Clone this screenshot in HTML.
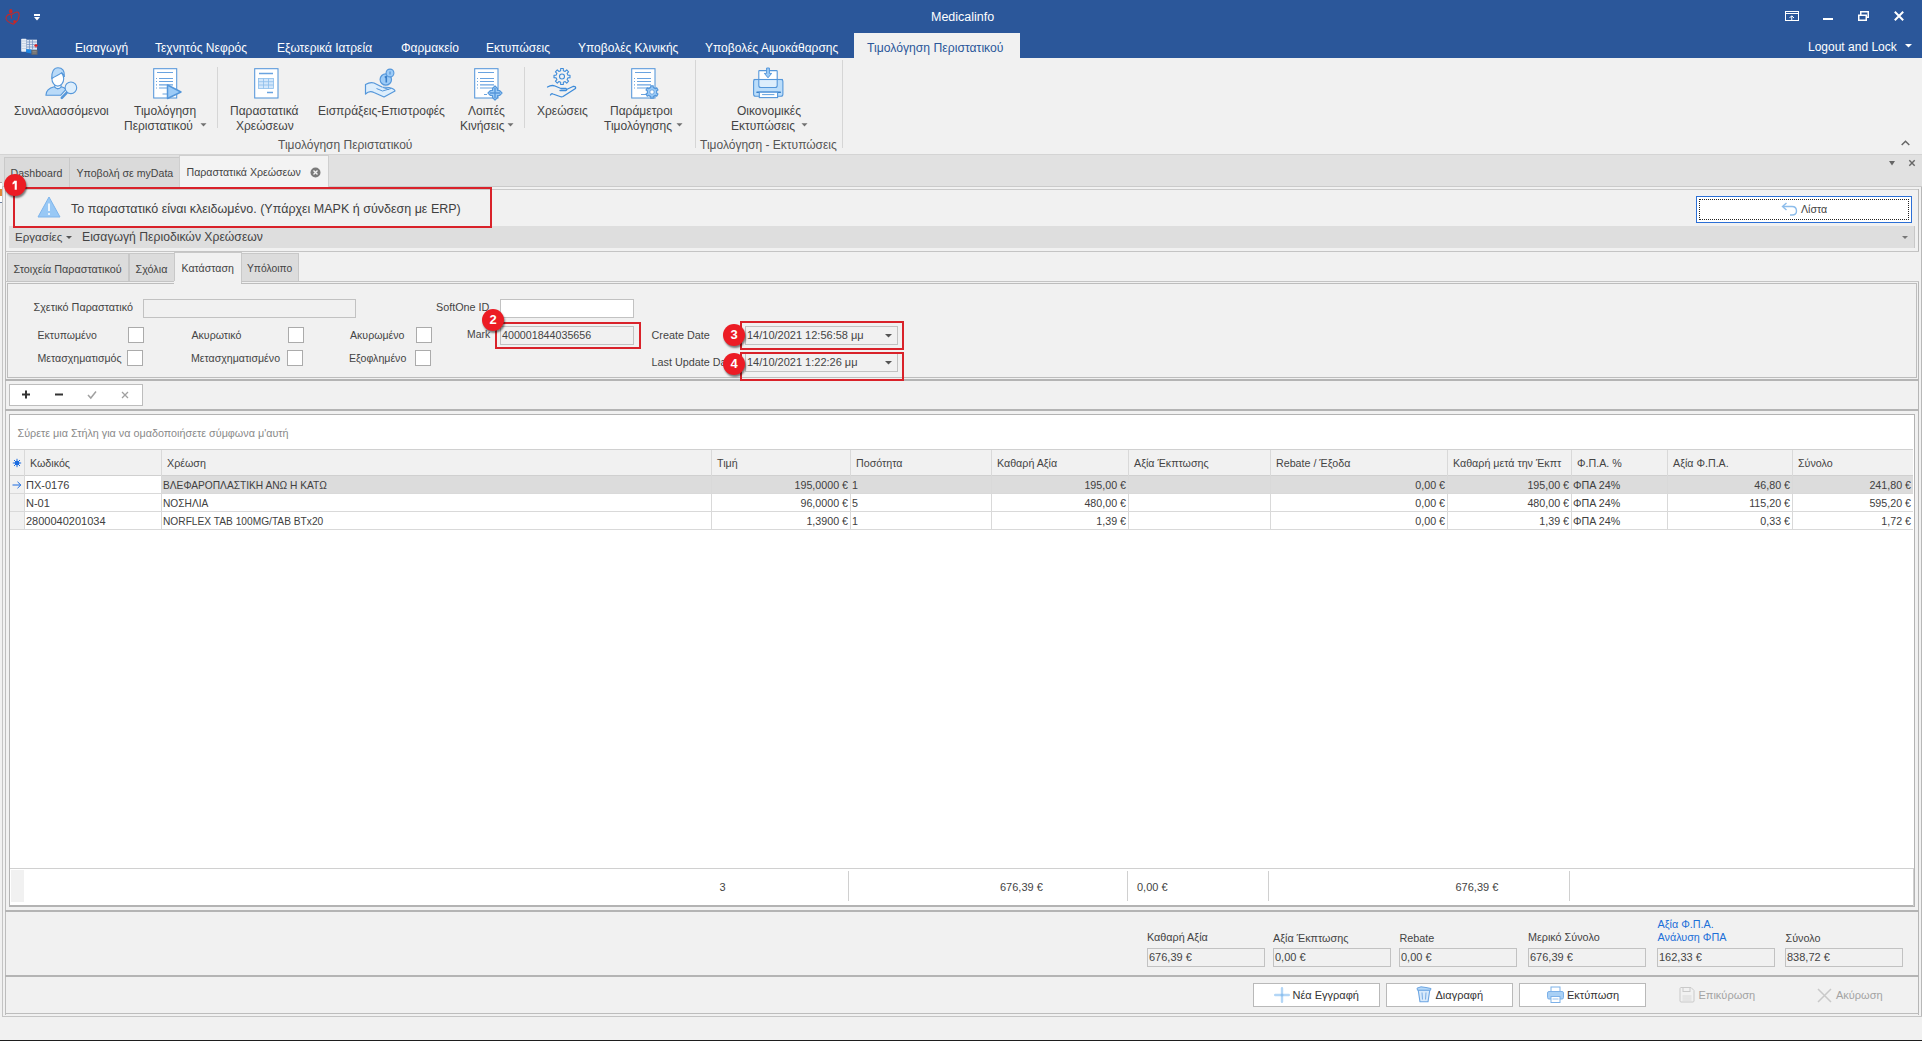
<!DOCTYPE html>
<html><head><meta charset="utf-8">
<style>
*{box-sizing:border-box;margin:0;padding:0}
html,body{width:1922px;height:1041px;overflow:hidden;background:#F1F1F1;font-family:"Liberation Sans",sans-serif;color:#444;font-size:10.7px;position:relative}
.a{position:absolute}
.t{position:absolute;white-space:nowrap;line-height:1}
.rt{color:#fff;font-size:12px;top:42px}
.rl{position:absolute;white-space:nowrap;font-size:12px;line-height:15px;color:#444;text-align:center}
.sep{position:absolute;width:1px;background:#D6D6D6}
.badge{position:absolute;width:22px;height:22px;border-radius:50%;background:#EC1C24;color:#fff;font-weight:bold;font-size:13px;text-align:center;line-height:22px;box-shadow:1px 2px 2px rgba(0,0,0,.5)}
.rbox{position:absolute;border:2px solid #D9222A}
.cb{position:absolute;width:16px;height:16px;background:#fff;border:1px solid #ABABAB}
.tx{position:absolute;border:1px solid #C2C2C2;background:#F1F1F1}
.ln{position:absolute;background:#C6C6C6}
.gl{position:absolute;background:#D9D9D9}
.c{position:absolute;white-space:nowrap;font-size:10.7px;line-height:18px;color:#404040}
.cr{position:absolute;white-space:nowrap;font-size:10.7px;line-height:18px;color:#404040;text-align:right}
.btn{position:absolute;height:24px;border:1px solid #B9B9B9;background:#fff;font-size:11px;color:#333;line-height:22px;white-space:nowrap}
svg{position:absolute;overflow:visible}
</style></head><body>
<!-- TITLE BAR -->
<div class="a" style="left:0;top:0;width:1922px;height:58px;background:#2B579A"></div>
<!-- logo heart -->
<svg style="left:4px;top:8px" width="18" height="18" viewBox="0 0 18 18">
<ellipse cx="6.8" cy="3.3" rx="1.7" ry="2.3" fill="#C62828"/>
<path d="M6.8 6.5 C4.5 6,1.8 7.5,2 10.5 C2.3 13,5.5 14.8,9.4 16.2 C12 14.5,14.5 11.5,15 8.5 C15.5 5.5,14.5 3.8,13 4 C11 4.3,9 5.5,7.2 6.8 L7.6 10.5" fill="none" stroke="#C62828" stroke-width="1.1" stroke-linejoin="round"/>
<circle cx="10.6" cy="13.6" r="1.5" fill="#C62828"/>
</svg>
<svg style="left:21px;top:38px" width="18" height="17" viewBox="0 0 18 17">
<rect x="0.2" y="0.7" width="5.3" height="13" rx="0.8" fill="#E8EEF6"/>
<path d="M0.5 3h5M0.5 5.5h5M0.5 8h5M0.5 10.5h5" stroke="#B8C6DA" stroke-width="0.7"/>
<rect x="5.8" y="1.7" width="10.2" height="10" fill="#DDE6F2"/>
<path d="M6 4h10M6 6.5h10M6 9h10M8.5 2v9.5M11.5 2v9.5" stroke="#6E8DBE" stroke-width="0.7"/>
<path d="M5.2 11 L10.5 11.5 L10.5 15.5 L5.2 14.5Z" fill="#1E88E5"/>
<rect x="10.5" y="12" width="6" height="4.8" fill="#6B6B6B"/>
<path d="M11.5 13.5h4M11.5 15h4" stroke="#9A9A9A" stroke-width="0.6"/>
<path d="M13.3 7.7h3.4M15 6v3.4" stroke="#E02020" stroke-width="1.3"/>
</svg>
<!-- QAT arrow -->
<div class="a" style="left:34px;top:14px;width:6px;height:2px;background:#fff"></div>
<svg style="left:34px;top:17px" width="6" height="4"><path d="M0 0 L6 0 L3 3.5Z" fill="#fff"/></svg>
<div class="t" style="left:931px;top:11px;color:#fff;font-size:12.5px">Medicalinfo</div>
<!-- window buttons -->
<svg style="left:1785px;top:11px" width="14" height="10" viewBox="0 0 14 10"><rect x="0.5" y="0.5" width="13" height="9" fill="none" stroke="#fff"/><path d="M0.5 2.5h13" stroke="#fff"/><path d="M6.75 9.5V5M4.5 7l2.25-2.25L9 7" stroke="#fff" fill="none"/></svg>
<div class="a" style="left:1823px;top:18px;width:10px;height:2px;background:#fff"></div>
<svg style="left:1858px;top:11px" width="11" height="10" viewBox="0 0 11 10"><rect x="0.75" y="4.25" width="7.5" height="5" fill="none" stroke="#fff" stroke-width="1.5"/><path d="M2.75 4.25V0.75h7.5v5.5H8.25" fill="none" stroke="#fff" stroke-width="1.5"/></svg>
<svg style="left:1894px;top:11px" width="10" height="10" viewBox="0 0 10 10"><path d="M0.8 0.8L9.2 9.2M9.2 0.8L0.8 9.2" stroke="#fff" stroke-width="2"/></svg>
<!-- ribbon tabs -->
<div class="t rt" style="left:75px">Εισαγωγή</div>
<div class="t rt" style="left:155px">Τεχνητός Νεφρός</div>
<div class="t rt" style="left:277px">Εξωτερικά Ιατρεία</div>
<div class="t rt" style="left:401px">Φαρμακείο</div>
<div class="t rt" style="left:486px">Εκτυπώσεις</div>
<div class="t rt" style="left:578px">Υποβολές Κλινικής</div>
<div class="t rt" style="left:705px">Υποβολές Αιμοκάθαρσης</div>
<div class="a" style="left:854px;top:33px;width:166px;height:25px;background:#F1F1F1"></div>
<div class="t rt" style="left:867px;color:#2B579A;font-size:12.2px">Τιμολόγηση Περιστατικού</div>
<div class="t rt" style="left:1808px;top:41px">Logout and Lock</div>
<svg style="left:1905px;top:44px" width="7" height="4"><path d="M0 0h7L3.5 3.5Z" fill="#fff"/></svg>
<!-- RIBBON BODY -->
<!-- icon 1 person search -->
<svg style="left:45px;top:67px" width="33" height="33" viewBox="0 0 33 33">
<path d="M0.9 28.3 C1 23.8,4 21,9.3 19.8 L12.8 21.9 L16.3 19.8 C18.5 20.3,20 21.2,21 22.3 L15.6 28.3Z" fill="#B9DAF8" stroke="#5597DA" stroke-width="1.1" stroke-linejoin="round"/>
<path d="M9.8 16.5 V20 C11.5 22.2,14.5 22.2,16 20 V16.5" fill="#fff" stroke="#5597DA" stroke-width="1.1"/>
<ellipse cx="12.8" cy="11.8" rx="5.9" ry="7.3" fill="#fff" stroke="#5597DA" stroke-width="1.1"/>
<path d="M6.9 11.5 C6.3 4.5,9 0.8,13 0.8 C17.2 0.8,19.8 3.5,19.4 9.5 C18.5 7.5,17.5 6.3,16.8 5.6 C14.5 7.8,10.5 8.8,6.9 11.5Z" fill="#B9DAF8" stroke="#5597DA" stroke-width="1.1" stroke-linejoin="round"/>
<path d="M21.6 25.8 L16.8 30.8" stroke="#5597DA" stroke-width="2.6" stroke-linecap="round"/>
<circle cx="25.9" cy="20.8" r="5.8" fill="#DDEEFC" stroke="#5597DA" stroke-width="1.1"/>
</svg>
<!-- icon 2 doc play -->
<svg style="left:153px;top:68px" width="30" height="31" viewBox="0 0 30 31">
<rect x="0.7" y="0.7" width="23" height="29.3" fill="#fff" stroke="#5596DA" stroke-width="1.05"/>
<path d="M4 4.5h16M6 10.5h14M6 13.5h14M6 16.8h14M6 20h8M9.5 26h6" stroke="#69A3E0" stroke-width="1.2"/>
<path d="M3 10.5h1M3 13.5h1M3 16.8h1M3 20h1" stroke="#69A3E0" stroke-width="1.2"/>
<path d="M14.5 17 L28 24 L14.5 30.5Z" fill="#9CCBF7" stroke="#5597DA" stroke-width="1.5" stroke-linejoin="round"/>
</svg>
<!-- icon 3 doc table -->
<svg style="left:254px;top:68px" width="25" height="31" viewBox="0 0 25 31">
<rect x="0.7" y="0.7" width="23.3" height="29.3" fill="#fff" stroke="#5596DA" stroke-width="1.05"/>
<path d="M5 5.5h14M13 24.5h6" stroke="#69A3E0" stroke-width="1.3"/>
<rect x="4.5" y="10.5" width="15" height="10" fill="#D3E7FB" stroke="#8BBDEB" stroke-width="0.8"/>
<path d="M4.5 13.7h15M4.5 17h15M9.5 10.5v10M14.5 10.5v10" stroke="#8BBDEB" stroke-width="0.8"/>
</svg>
<!-- icon 4 hand coins -->
<svg style="left:365px;top:68px" width="32" height="30" viewBox="0 0 32 30">
<path d="M0.5 16.5 C3 15,6 14,9 15 L17 19 L24 19.5 C26 20,30 21,30 23 L19 29 L9 24.5 C6 23,3 23.5,0.5 26Z" fill="#DDEEFC" stroke="#5597DA" stroke-width="1.2" stroke-linejoin="round"/>
<path d="M11.5 20.5 L17.5 23 L26 20.5M18 19.5 L24 21.5" fill="none" stroke="#5597DA" stroke-width="1"/>
<circle cx="20.8" cy="11.5" r="5.7" fill="#9CCBF7" stroke="#5597DA" stroke-width="1.2"/>
<path d="M19.8 9.5 L21.3 8.5 V14.5" stroke="#3A7FC8" stroke-width="1.6" fill="none"/>
<circle cx="25" cy="5" r="3.9" fill="#9CCBF7" stroke="#5597DA" stroke-width="1.1"/>
<path d="M25 3.5v3" stroke="#3A7FC8" stroke-width="0.9"/>
</svg>
<!-- icon 5 doc cross -->
<svg style="left:474px;top:68px" width="30" height="31" viewBox="0 0 30 31">
<rect x="0.7" y="0.7" width="23.3" height="29.3" fill="#fff" stroke="#5596DA" stroke-width="1.05"/>
<path d="M4 4.5h16M6 10.5h14M6 13.5h14M6 16.8h14M6 20h14M10 26.5h3" stroke="#69A3E0" stroke-width="1.2"/>
<path d="M3 10.5h1M3 13.5h1M3 16.8h1M3 20h1" stroke="#69A3E0" stroke-width="1.2"/>
<path d="M21 18 L23.5 20.5 V22.5 H25.5 L28 25 L25.5 27.5 H23.5 V29.5 L21 32 L18.5 29.5 V27.5 H16.5 L14 25 L16.5 22.5 H18.5 V20.5Z" fill="#9CCBF7" stroke="#5597DA" stroke-width="1.2" stroke-linejoin="round"/>
<path d="M21 20v10M16 25h10" stroke="#5597DA" stroke-width="1.4"/>
</svg>
<!-- icon 6 hand gear -->
<svg style="left:547px;top:68px" width="30" height="30" viewBox="0 0 30 30">
<path d="M13.65 2.65 L13.68 0.51 L16.32 0.51 L16.35 2.65 L18.18 3.41 L19.72 1.91 L21.59 3.78 L20.09 5.32 L20.85 7.15 L22.99 7.18 L22.99 9.82 L20.85 9.85 L20.09 11.68 L21.59 13.22 L19.72 15.09 L18.18 13.59 L16.35 14.35 L16.32 16.49 L13.68 16.49 L13.65 14.35 L11.82 13.59 L10.28 15.09 L8.41 13.22 L9.91 11.68 L9.15 9.85 L7.01 9.82 L7.01 7.18 L9.15 7.15 L9.91 5.32 L8.41 3.78 L10.28 1.91 L11.82 3.41 Z" fill="none" stroke="#3D8BD9" stroke-width="1.1" stroke-linejoin="round"/><circle cx="15" cy="8.5" r="2.5" fill="none" stroke="#3D8BD9" stroke-width="1.1"/>
<path d="M0.5 19 C3 17.5,5.5 17,8 18 L14 20.5 H19 C20 21,20 22,19 22.5 L13 22.5 M19.5 21.5 L26 18.5 C28 18,29 19,28.5 20.5 L16 28.5 C15 29,14 29,13 28.5 L6 26 C5 25.5,4 26,3.5 27" fill="none" stroke="#3D8BD9" stroke-width="1.3" stroke-linecap="round" stroke-linejoin="round"/>
</svg>
<!-- icon 7 doc gear -->
<svg style="left:631px;top:68px" width="30" height="31" viewBox="0 0 30 31">
<rect x="0.7" y="0.7" width="23.3" height="29.3" fill="#fff" stroke="#5596DA" stroke-width="1.05"/>
<path d="M4 4.5h16M6 10.5h14M6 13.5h14M6 16.8h14M6 20h14M10 26.5h5" stroke="#69A3E0" stroke-width="1.2"/>
<path d="M3 10.5h1M3 13.5h1M3 16.8h1M3 20h1" stroke="#69A3E0" stroke-width="1.2"/>
<path d="M19.76 19.36 L19.75 17.82 L22.25 17.82 L22.24 19.36 L24.39 20.61 L25.73 19.83 L26.97 21.99 L25.64 22.76 L25.64 25.24 L26.97 26.01 L25.73 28.17 L24.39 27.39 L22.24 28.64 L22.25 30.18 L19.75 30.18 L19.76 28.64 L17.61 27.39 L16.27 28.17 L15.03 26.01 L16.36 25.24 L16.36 22.76 L15.03 21.99 L16.27 19.83 L17.61 20.61 Z" fill="#9CCBF7" stroke="#5597DA" stroke-width="1.2" stroke-linejoin="round"/><circle cx="21" cy="24" r="2.2" fill="#fff" stroke="#5597DA" stroke-width="0.8"/>
</svg>
<!-- icon 8 printer -->
<svg style="left:753px;top:67px" width="31" height="31" viewBox="0 0 31 31">
<rect x="0.6" y="12.5" width="29.3" height="16.7" rx="2" fill="#BBDDFA" stroke="#5597DA" stroke-width="1.1"/>
<path d="M5.8 12.5 V18.5 C5.8 19.5,6.8 20.5,7.8 20.5 H22.3 C23.3 20.5,24.2 19.5,24.2 18.5 V12.5Z" fill="#DDEEFC" stroke="#5597DA" stroke-width="1.1"/>
<rect x="5.8" y="3.6" width="18.4" height="8.9" rx="0.6" fill="#fff" stroke="#5597DA" stroke-width="1.1"/>
<path d="M0.6 12.5 H29.9" stroke="#5597DA" stroke-width="1.1"/>
<path d="M13.6 1 H16.4 V6.4 H18.6 L15 10.8 L11.4 6.4 H13.6Z" fill="#9CCBF7" stroke="#5597DA" stroke-width="1" stroke-linejoin="round"/>
<path d="M4 25.2 H27.3" stroke="#3A7FC8" stroke-width="1.6" stroke-linecap="round"/>
<rect x="6.3" y="25.2" width="18.3" height="5.4" fill="#fff" stroke="#5597DA" stroke-width="1.1"/>
<path d="M9.5 27.6 H21" stroke="#5597DA" stroke-width="0.9" stroke-linecap="round"/>
</svg>

<div class="rl" style="left:14px;top:104px">Συναλλασσόμενοι</div>
<div class="rl" style="left:134px;top:104px">Τιμολόγηση</div>
<div class="rl" style="left:124px;top:119px">Περιστατικού</div>
<div class="rl" style="left:230px;top:104px">Παραστατικά</div>
<div class="rl" style="left:236px;top:119px">Χρεώσεων</div>
<div class="rl" style="left:318px;top:104px">Εισπράξεις-Επιστροφές</div>
<div class="rl" style="left:468px;top:104px">Λοιπές</div>
<div class="rl" style="left:460px;top:119px">Κινήσεις</div>
<div class="rl" style="left:537px;top:104px">Χρεώσεις</div>
<div class="rl" style="left:610px;top:104px">Παράμετροι</div>
<div class="rl" style="left:604px;top:119px">Τιμολόγησης</div>
<div class="rl" style="left:737px;top:104px">Οικονομικές</div>
<div class="rl" style="left:731px;top:119px">Εκτυπώσεις</div>
<svg style="left:200px;top:123px" width="7" height="4"><path d="M0.5 0.2h6L3.5 3.5Z" fill="#707070"/></svg>
<svg style="left:507px;top:123px" width="7" height="4"><path d="M0.5 0.2h6L3.5 3.5Z" fill="#707070"/></svg>
<svg style="left:676px;top:123px" width="7" height="4"><path d="M0.5 0.2h6L3.5 3.5Z" fill="#707070"/></svg>
<svg style="left:801px;top:123px" width="7" height="4"><path d="M0.5 0.2h6L3.5 3.5Z" fill="#707070"/></svg>
<div class="rl" style="left:278px;top:138px;color:#555">Τιμολόγηση Περιστατικού</div>
<div class="rl" style="left:700px;top:138px;color:#555">Τιμολόγηση - Εκτυπώσεις</div>
<div class="sep" style="left:217px;top:67px;height:61px"></div>
<div class="sep" style="left:524px;top:67px;height:61px"></div>
<div class="sep" style="left:695px;top:60px;height:88px"></div>
<div class="sep" style="left:842px;top:60px;height:88px"></div>
<svg style="left:1901px;top:140px" width="9" height="6"><path d="M0.7 5 L4.5 1.3 L8.3 5" fill="none" stroke="#666" stroke-width="1.5"/></svg>
<div class="a" style="left:0;top:154px;width:1922px;height:1px;background:#D4D4D4"></div>
<!-- DOC TAB STRIP -->
<div class="a" style="left:0;top:155px;width:1922px;height:32px;background:#E1E1E1"></div>
<div class="a" style="left:0;top:186px;width:1922px;height:1px;background:#CACACA"></div>
<div class="a" style="left:4px;top:157px;width:66px;height:30px;background:#DADADA;border:1px solid #C9C9C9;border-bottom:none"></div>
<div class="a" style="left:70px;top:157px;width:110px;height:30px;background:#DADADA;border:1px solid #C9C9C9;border-left:none;border-bottom:none"></div>
<div class="a" style="left:179px;top:155px;width:150px;height:33px;background:#F3F3F3;border:1px solid #CFCFCF;border-bottom:none"></div>
<div class="t" style="left:10.5px;top:168px;font-size:10.6px;color:#444">Dashboard</div>
<div class="t" style="left:76.5px;top:168px;font-size:10.6px;color:#444">Υποβολή σε myData</div>
<div class="t" style="left:186.5px;top:167px;font-size:10.6px;color:#444">Παραστατικά Χρεώσεων</div>
<svg style="left:310px;top:167px" width="11" height="11" viewBox="0 0 11 11"><circle cx="5.5" cy="5.5" r="5" fill="#7A7A7A"/><path d="M3.5 3.5l4 4M7.5 3.5l-4 4" stroke="#F3F3F3" stroke-width="1.4"/></svg>
<svg style="left:1889px;top:161px" width="6" height="5"><path d="M0 0h6L3 4.5Z" fill="#666"/></svg>
<svg style="left:1909px;top:160px" width="6" height="6"><path d="M0.3 0.3l5.4 5.4M5.7 0.3l-5.4 5.4" stroke="#666" stroke-width="1.4"/></svg>
<!-- left edge bits -->
<div class="a" style="left:0;top:182px;width:2px;height:21px;background:#fff;border-top:1px solid #aaa;border-bottom:1px solid #6b7fa0"></div>
<div class="a" style="left:0;top:189px;width:2px;height:7px;background:#E08A3C"></div>
<!-- outer panel -->
<div class="a" style="left:2px;top:187px;width:1px;height:830px;background:#C4C4C4"></div>
<div class="a" style="left:5px;top:189px;width:1px;height:826px;background:#BDBDBD"></div>
<div class="a" style="left:5px;top:189px;width:1914px;height:1px;background:#C9C9C9"></div>
<div class="a" style="left:1918px;top:189px;width:1px;height:63px;background:#B6B6B6"></div>
<div class="a" style="left:1918px;top:281px;width:1px;height:734px;background:#B6B6B6"></div>
<div class="a" style="left:1921px;top:187px;width:1px;height:830px;background:#B8B8B8"></div>
<!-- warning -->
<svg style="left:37px;top:196px" width="24" height="22" viewBox="0 0 24 22"><path d="M12 1 L23 21 H1Z" fill="#98C8F5" stroke="#7EB5EC" stroke-width="1" stroke-linejoin="round"/><path d="M12 7.5v7.5" stroke="#fff" stroke-width="1.6"/><circle cx="12" cy="18" r="1" fill="#fff"/></svg>
<div class="t" style="left:71px;top:203px;font-size:12.5px;color:#404040">Το παραστατικό είναι κλειδωμένο. (Υπάρχει ΜΑΡΚ ή σύνδεση με ERP)</div>
<!-- Λίστα button -->
<div class="a" style="left:1696px;top:196px;width:216px;height:27px;background:#fff;border:1px solid #2B6FD6"></div>
<div class="a" style="left:1699px;top:199px;width:210px;height:21px;border:1px dotted #222"></div>
<svg style="left:1781px;top:202px" width="17" height="14" viewBox="0 0 17 14"><path d="M2 4.5 H11 C14 4.5,15.5 6.5,15.5 9 C15.5 11.5,14 13,11 13 H9" fill="none" stroke="#8DBDEB" stroke-width="1.4"/><path d="M5.5 1 L1.5 4.5 L5.5 8" fill="none" stroke="#8DBDEB" stroke-width="1.4"/></svg>
<div class="t" style="left:1801px;top:204px;font-size:10.6px;color:#444">Λίστα</div>
<!-- Εργασίες bar -->
<div class="a" style="left:9px;top:226px;width:1906px;height:22px;background:#DEDEDE"></div>
<div class="a" style="left:1914px;top:226px;width:1px;height:22px;background:#C8C8C8"></div>
<div class="t" style="left:15px;top:231px;font-size:11.6px;color:#444">Εργασίες</div>
<svg style="left:66px;top:236px" width="6" height="4"><path d="M0 0h6L3 3Z" fill="#555"/></svg>
<div class="t" style="left:82px;top:231px;font-size:12.2px;color:#444">Εισαγωγή Περιοδικών Χρεώσεων</div>
<svg style="left:1902px;top:236px" width="6" height="4"><path d="M0 0h6L3 3Z" fill="#777"/></svg>
<div class="a" style="left:5px;top:251px;width:1914px;height:1px;background:#C4C4C4"></div>
<div class="rbox" style="left:13px;top:187px;width:479px;height:41px"></div>
<div class="badge" style="left:4px;top:174px"><svg style="left:0;top:0" width="22" height="22" viewBox="0.5 0.5 22 22"><path d="M10.6 7.3 H13.3 V16.2 H11.2 V9.8 C10.6 10.4,9.9 10.8,9 11.1 V9.2 C9.6 8.9,10.2 8.2,10.6 7.3Z" fill="#fff"/></svg></div>
<!-- INNER TABS -->
<div class="a" style="left:7px;top:253px;width:122px;height:29px;background:#DCDCDC;border:1px solid #C8C8C8;border-bottom:none"></div>
<div class="a" style="left:129px;top:253px;width:46px;height:29px;background:#DCDCDC;border:1px solid #C8C8C8;border-bottom:none"></div>
<div class="a" style="left:174px;top:252px;width:68px;height:31px;background:#F1F1F1;border:1px solid #C8C8C8;border-bottom:none"></div>
<div class="a" style="left:241px;top:253px;width:58px;height:29px;background:#DCDCDC;border:1px solid #C8C8C8;border-bottom:none"></div>
<div class="t" style="left:13.5px;top:264px;font-size:10.8px;color:#444">Στοιχεία Παραστατικού</div>
<div class="t" style="left:135.5px;top:264px;font-size:10.8px;color:#444">Σχόλια</div>
<div class="t" style="left:181.5px;top:263px;font-size:10.6px;color:#444">Κατάσταση</div>
<div class="t" style="left:247px;top:264px;font-size:10.3px;color:#444">Υπόλοιπο</div>
<!-- form panel -->
<div class="a" style="left:5px;top:281px;width:1914px;height:1px;background:#C4C4C4"></div>
<div class="a" style="left:7px;top:283px;width:1910px;height:95px;border:1px solid #BDBDBD"></div>
<div class="a" style="left:174px;top:281px;width:67px;height:3px;background:#F1F1F1"></div>
<div class="t" style="left:33.5px;top:302px;font-size:10.8px">Σχετικό Παραστατικό</div>
<div class="tx" style="left:143px;top:299px;width:213px;height:19px"></div>
<div class="t" style="left:436px;top:302px;font-size:10.8px">SoftOne ID</div>
<div class="tx" style="left:500px;top:299px;width:134px;height:19px;background:#fff"></div>
<div class="t" style="left:37.5px;top:330px;font-size:10.5px">Εκτυπωμένο</div>
<div class="cb" style="left:128px;top:327px"></div>
<div class="t" style="left:37.5px;top:353px;font-size:10.6px">Μετασχηματισμός</div>
<div class="cb" style="left:127px;top:350px"></div>
<div class="t" style="left:191.5px;top:330px;font-size:10.6px">Ακυρωτικό</div>
<div class="cb" style="left:288px;top:327px"></div>
<div class="t" style="left:191px;top:353px;font-size:10.6px">Μετασχηματισμένο</div>
<div class="cb" style="left:287px;top:350px"></div>
<div class="t" style="left:350px;top:330px;font-size:10.6px">Ακυρωμένο</div>
<div class="cb" style="left:416px;top:327px"></div>
<div class="t" style="left:349px;top:353px;font-size:10.6px">Εξοφλημένο</div>
<div class="cb" style="left:415px;top:350px"></div>
<div class="t" style="left:467px;top:330px;font-size:10.4px">Mark</div>
<div class="tx" style="left:500px;top:326px;width:134px;height:19px"></div>
<div class="t" style="left:502px;top:330px;font-size:10.7px">400001844035656</div>
<div class="t" style="left:651.5px;top:330px;font-size:10.8px">Create Date</div>
<div class="t" style="left:651.5px;top:357px;font-size:10.8px">Last Update Da</div>
<div class="tx" style="left:745px;top:326px;width:153px;height:19px"></div>
<div class="t" style="left:747px;top:330px;font-size:11px">14/10/2021 12:56:58 μμ</div>
<svg style="left:885px;top:334px" width="7" height="4"><path d="M0 0h7L3.5 3.5Z" fill="#555"/></svg>
<div class="tx" style="left:745px;top:353px;width:153px;height:19px"></div>
<div class="t" style="left:747px;top:357px;font-size:11px">14/10/2021 1:22:26 μμ</div>
<svg style="left:885px;top:361px" width="7" height="4"><path d="M0 0h7L3.5 3.5Z" fill="#555"/></svg>
<!-- splitter lines -->
<div class="a" style="left:5px;top:379px;width:1914px;height:2px;background:#B4B4B4"></div>
<div class="a" style="left:9px;top:384px;width:134px;height:22px;background:#fff;border:1px solid #BDBDBD"></div>
<svg style="left:21px;top:390px" width="10" height="10"><path d="M5 0.5v8M1 4.5h8" stroke="#333" stroke-width="2"/></svg>
<svg style="left:54px;top:390px" width="10" height="10"><path d="M1 4.5h8" stroke="#333" stroke-width="2"/></svg>
<svg style="left:87px;top:390px" width="10" height="10"><path d="M1 5l2.8 3L9 1.5" fill="none" stroke="#A0A0A0" stroke-width="1.5"/></svg>
<svg style="left:121px;top:391px" width="8" height="8"><path d="M1 1l6 6M7 1l-6 6" stroke="#A0A0A0" stroke-width="1.3"/></svg>
<div class="a" style="left:5px;top:409px;width:1914px;height:2px;background:#B4B4B4"></div>
<div class="rbox" style="left:495px;top:322px;width:146px;height:27px"></div>
<div class="rbox" style="left:740px;top:321px;width:164px;height:29px"></div>
<div class="rbox" style="left:740px;top:352px;width:164px;height:29px"></div>
<div class="badge" style="left:482px;top:309px">2</div>
<div class="badge" style="left:723px;top:324px">3</div>
<div class="badge" style="left:723px;top:353px">4</div>
<!-- GRID -->
<div class="a" style="left:9px;top:414px;width:1906px;height:493px;background:#fff;border:1px solid #B3B3B3;border-bottom:2px solid #B3B3B3"></div>
<div class="t" style="left:17.5px;top:428px;font-size:10.8px;color:#8A8A8A">Σύρετε μια Στήλη για να ομαδοποιήσετε σύμφωνα μ'αυτή</div>
<div class="a" style="left:10px;top:449px;width:1903px;height:1px;background:#D0D0D0"></div>
<div class="a" style="left:10px;top:450px;width:1903px;height:25px;background:#F1F1F1"></div>
<div class="a" style="left:10px;top:475px;width:1903px;height:1px;background:#D0D0D0"></div>
<div class="a" style="left:161px;top:476px;width:1752px;height:17px;background:#DCDCDC"></div>
<div class="a" style="left:10px;top:476px;width:14px;height:53px;background:#F1F1F1"></div>
<div class="gl" style="left:10px;top:493px;width:1903px;height:1px"></div>
<div class="gl" style="left:10px;top:511px;width:1903px;height:1px"></div>
<div class="gl" style="left:10px;top:529px;width:1903px;height:1px"></div>
<div class="gl" style="left:24px;top:450px;width:1px;height:79px"></div>
<div class="gl" style="left:161px;top:450px;width:1px;height:79px"></div>
<div class="gl" style="left:711px;top:450px;width:1px;height:79px"></div>
<div class="gl" style="left:850px;top:450px;width:1px;height:79px"></div>
<div class="gl" style="left:991px;top:450px;width:1px;height:79px"></div>
<div class="gl" style="left:1128px;top:450px;width:1px;height:79px"></div>
<div class="gl" style="left:1270px;top:450px;width:1px;height:79px"></div>
<div class="gl" style="left:1447px;top:450px;width:1px;height:79px"></div>
<div class="gl" style="left:1571px;top:450px;width:1px;height:79px"></div>
<div class="gl" style="left:1667px;top:450px;width:1px;height:79px"></div>
<div class="gl" style="left:1792px;top:450px;width:1px;height:79px"></div>
<svg style="left:12px;top:458px" width="10" height="10" viewBox="0 0 10 10"><g stroke="#1A6BE0" stroke-width="1"><path d="M5 0.8v8.4M0.8 5h8.4M2 2l6 6M8 2l-6 6"/></g><circle cx="5" cy="5" r="2.3" fill="#1A6BE0"/></svg>
<svg style="left:12px;top:481px" width="10" height="8" viewBox="0 0 10 8"><path d="M0.5 4h8.3M5.5 0.8L8.8 4L5.5 7.2" fill="none" stroke="#1A6BE0" stroke-width="1"/></svg>
<div class="t" style="left:30px;top:458px;font-size:10.7px;color:#444">Κωδικός</div>
<div class="t" style="left:167px;top:458px;font-size:10.7px;color:#444">Χρέωση</div>
<div class="t" style="left:717px;top:458px;font-size:10.7px;color:#444">Τιμή</div>
<div class="t" style="left:856px;top:458px;font-size:10.7px;color:#444">Ποσότητα</div>
<div class="t" style="left:997px;top:458px;font-size:10.7px;color:#444">Καθαρή Αξία</div>
<div class="t" style="left:1134px;top:458px;font-size:10.7px;color:#444">Αξία Έκπτωσης</div>
<div class="t" style="left:1276px;top:458px;font-size:10.7px;color:#444">Rebate / Έξοδα</div>
<div class="t" style="left:1453px;top:458px;font-size:10.7px;color:#444">Καθαρή μετά την Έκπτ</div>
<div class="t" style="left:1577px;top:458px;font-size:10.7px;color:#444">Φ.Π.Α. %</div>
<div class="t" style="left:1673px;top:458px;font-size:10.7px;color:#444">Αξία Φ.Π.Α.</div>
<div class="t" style="left:1798px;top:458px;font-size:10.7px;color:#444">Σύνολο</div>
<div class="c" style="left:26px;top:476px;height:17px;font-size:11px">ΠΧ-0176</div>
<div class="c" style="left:163px;top:477px;height:17px;font-size:10.2px">ΒΛΕΦΑΡΟΠΛΑΣΤΙΚΗ ΑΝΩ Η ΚΑΤΩ</div>
<div class="cr" style="left:711px;top:476px;width:137px;height:17px">195,0000 €</div>
<div class="c" style="left:852px;top:476px;height:17px;font-size:10.7px">1</div>
<div class="cr" style="left:991px;top:476px;width:135px;height:17px">195,00 €</div>
<div class="cr" style="left:1270px;top:476px;width:175px;height:17px">0,00 €</div>
<div class="cr" style="left:1447px;top:476px;width:122px;height:17px">195,00 €</div>
<div class="c" style="left:1573px;top:476px;height:17px;font-size:10.7px">ΦΠΑ 24%</div>
<div class="cr" style="left:1667px;top:476px;width:123px;height:17px">46,80 €</div>
<div class="cr" style="left:1792px;top:476px;width:119px;height:17px">241,80 €</div>
<div class="c" style="left:26px;top:494px;height:17px;font-size:11px">N-01</div>
<div class="c" style="left:163px;top:495px;height:17px;font-size:10.2px">ΝΟΣΗΛΙΑ</div>
<div class="cr" style="left:711px;top:494px;width:137px;height:17px">96,0000 €</div>
<div class="c" style="left:852px;top:494px;height:17px;font-size:10.7px">5</div>
<div class="cr" style="left:991px;top:494px;width:135px;height:17px">480,00 €</div>
<div class="cr" style="left:1270px;top:494px;width:175px;height:17px">0,00 €</div>
<div class="cr" style="left:1447px;top:494px;width:122px;height:17px">480,00 €</div>
<div class="c" style="left:1573px;top:494px;height:17px;font-size:10.7px">ΦΠΑ 24%</div>
<div class="cr" style="left:1667px;top:494px;width:123px;height:17px">115,20 €</div>
<div class="cr" style="left:1792px;top:494px;width:119px;height:17px">595,20 €</div>
<div class="c" style="left:26px;top:512px;height:17px;font-size:11px">2800040201034</div>
<div class="c" style="left:163px;top:513px;height:17px;font-size:10.2px">NORFLEX TAB 100MG/TAB BTx20</div>
<div class="cr" style="left:711px;top:512px;width:137px;height:17px">1,3900 €</div>
<div class="c" style="left:852px;top:512px;height:17px;font-size:10.7px">1</div>
<div class="cr" style="left:991px;top:512px;width:135px;height:17px">1,39 €</div>
<div class="cr" style="left:1270px;top:512px;width:175px;height:17px">0,00 €</div>
<div class="cr" style="left:1447px;top:512px;width:122px;height:17px">1,39 €</div>
<div class="c" style="left:1573px;top:512px;height:17px;font-size:10.7px">ΦΠΑ 24%</div>
<div class="cr" style="left:1667px;top:512px;width:123px;height:17px">0,33 €</div>
<div class="cr" style="left:1792px;top:512px;width:119px;height:17px">1,72 €</div>
<div class="a" style="left:10px;top:868px;width:1903px;height:1px;background:#D0D0D0"></div>
<div class="a" style="left:11px;top:870px;width:13px;height:32px;background:#F1F1F1"></div>
<div class="a" style="left:848px;top:871px;width:1px;height:30px;background:#D0D0D0"></div>
<div class="a" style="left:1127px;top:871px;width:1px;height:30px;background:#D0D0D0"></div>
<div class="a" style="left:1268px;top:871px;width:1px;height:30px;background:#D0D0D0"></div>
<div class="a" style="left:1569px;top:871px;width:1px;height:30px;background:#D0D0D0"></div>
<div class="a" style="left:1913px;top:868px;width:1px;height:38px;background:#D0D0D0"></div>
<div class="t" style="left:719.5px;top:882px;font-size:11px">3</div>
<div class="t" style="left:1000px;top:882px;font-size:11px">676,39 €</div>
<div class="t" style="left:1137px;top:882px;font-size:11px">0,00 €</div>
<div class="t" style="left:1455.5px;top:882px;font-size:11px">676,39 €</div>
<!-- TOTALS -->
<div class="a" style="left:5px;top:910px;width:1914px;height:2px;background:#B4B4B4"></div>
<div class="a" style="left:5px;top:975px;width:1914px;height:2px;background:#B4B4B4"></div>
<div class="a" style="left:5px;top:1013px;width:1914px;height:1px;background:#BDBDBD"></div>
<div class="a" style="left:2px;top:1016px;width:1920px;height:1px;background:#C4C4C4"></div>
<div class="a" style="left:0;top:1040px;width:1922px;height:1px;background:#1E1E1E"></div>
<div class="t" style="left:1147px;top:932px;font-size:10.8px">Καθαρή Αξία</div>
<div class="tx" style="left:1147px;top:948px;width:118px;height:19px"></div>
<div class="t" style="left:1149px;top:952px;font-size:11px">676,39 €</div>
<div class="t" style="left:1273px;top:933px;font-size:10.8px">Αξία Έκπτωσης</div>
<div class="tx" style="left:1273px;top:948px;width:118px;height:19px"></div>
<div class="t" style="left:1275px;top:952px;font-size:11px">0,00 €</div>
<div class="t" style="left:1399.5px;top:933px;font-size:10.8px">Rebate</div>
<div class="tx" style="left:1399px;top:948px;width:118px;height:19px"></div>
<div class="t" style="left:1401px;top:952px;font-size:11px">0,00 €</div>
<div class="t" style="left:1528px;top:932px;font-size:10.8px">Μερικό Σύνολο</div>
<div class="tx" style="left:1528px;top:948px;width:118px;height:19px"></div>
<div class="t" style="left:1530px;top:952px;font-size:11px">676,39 €</div>
<div class="t" style="left:1657.5px;top:919px;font-size:10.8px;color:#1C6FD8">Αξία Φ.Π.Α.</div>
<div class="t" style="left:1657.5px;top:932px;font-size:10.8px;color:#1C6FD8">Ανάλυση ΦΠΑ</div>
<div class="tx" style="left:1657px;top:948px;width:118px;height:19px"></div>
<div class="t" style="left:1659px;top:952px;font-size:11px">162,33 €</div>
<div class="t" style="left:1785.5px;top:933px;font-size:10.8px">Σύνολο</div>
<div class="tx" style="left:1785px;top:948px;width:118px;height:19px"></div>
<div class="t" style="left:1787px;top:952px;font-size:11px">838,72 €</div>
<!-- BUTTONS -->
<div class="btn" style="left:1253px;top:983px;width:127px"></div>
<div class="btn" style="left:1386px;top:983px;width:127px"></div>
<div class="btn" style="left:1519px;top:983px;width:127px"></div>
<svg style="left:1274px;top:987px" width="16" height="16" viewBox="0 0 16 16"><path d="M8 1.2v13.6M1.2 8h13.6" stroke="#B3D6F6" stroke-width="2.4" stroke-linecap="round"/><circle cx="8" cy="8" r="1.5" fill="#8DC0EE"/></svg>
<div class="t" style="left:1292.5px;top:990px;font-size:11px;color:#333">Νέα Εγγραφή</div>
<svg style="left:1416px;top:986px" width="16" height="17" viewBox="0 0 16 17"><path d="M2.2 4 L4 15.8 H12 L13.8 4Z" fill="#D8EAFB" stroke="#6CA5E2" stroke-width="1.1" stroke-linejoin="round"/><path d="M1 2.2 L5 0.8 L10 1.5 L15 2.5 L14.5 4.2 H1.5Z" fill="#B5D8F8" stroke="#6CA5E2" stroke-width="1" stroke-linejoin="round"/><path d="M6 6.5 L6.5 13.5M10 6.5 L9.5 13.5" stroke="#6CA5E2" stroke-width="0.9"/></svg>
<div class="t" style="left:1435.5px;top:990px;font-size:11px;color:#333">Διαγραφή</div>
<svg style="left:1547px;top:986px" width="17" height="17" viewBox="0 0 17 17"><rect x="4" y="1" width="9" height="5" fill="#fff" stroke="#7DB1E8"/><rect x="0.5" y="5.5" width="16" height="7.5" rx="1.5" fill="#A9D0F5" stroke="#7DB1E8"/><rect x="4" y="10.5" width="9" height="6" fill="#fff" stroke="#7DB1E8"/><path d="M5.5 13h6" stroke="#7DB1E8" stroke-width="0.8"/></svg>
<div class="t" style="left:1567px;top:990px;font-size:11px;color:#333">Εκτύπωση</div>
<svg style="left:1679px;top:987px" width="16" height="16" viewBox="0 0 16 16"><path d="M1 1.5 C1 1,1.5 0.5,2 0.5 H12 L15 3.5 V14 C15 14.5,14.5 15,14 15 H2 C1.5 15,1 14.5,1 14Z" fill="#F1F1F1" stroke="#C9C9C9" stroke-width="1"/><rect x="4" y="0.5" width="7" height="4" fill="none" stroke="#C9C9C9"/><path d="M3.5 9h9M3.5 11h9M3.5 13h9" stroke="#D3D3D3" stroke-width="0.8"/></svg>
<div class="t" style="left:1698.5px;top:990px;font-size:11px;color:#A3A3A3">Επικύρωση</div>
<svg style="left:1817px;top:988px" width="15" height="15" viewBox="0 0 15 15"><path d="M1 1L14 14M14 1L1 14" stroke="#C9C9C9" stroke-width="1.5"/></svg>
<div class="t" style="left:1836px;top:990px;font-size:11px;color:#A3A3A3">Ακύρωση</div>
</body></html>
